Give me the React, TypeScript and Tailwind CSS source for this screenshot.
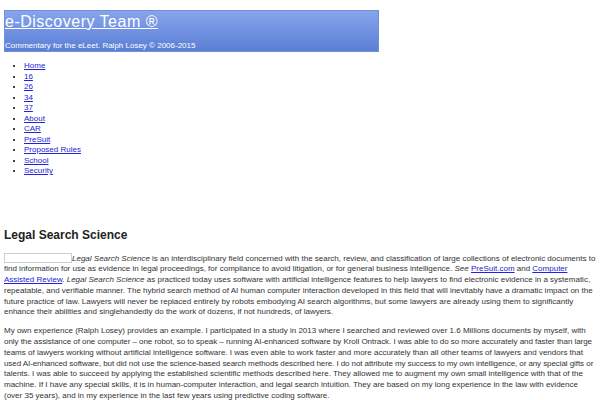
import React from "react"

const NAV = ["Home", "16", "26", "34", "37", "About", "CAR", "PreSuit", "Proposed Rules", "School", "Security"]

function A({ children }: { children: React.ReactNode }) {
  return (
    <a href="#" className="text-[#2323d8] underline">
      {children}
    </a>
  )
}

export default function App() {
  return (
    <div
      className="w-[600px] h-[400px] overflow-hidden bg-white px-[4px] pt-[10px] text-[#333]"
      style={{ fontFamily: '"Liberation Sans", Arial, sans-serif' }}
    >
      {/* Header */}
      <div className="w-[375px] h-[42px] border border-[#7090da] bg-gradient-to-b from-[#87a4ec] to-[#5b7fd6] text-white">
        <a href="#" className="block pt-[2px] text-[16px] leading-[18px] tracking-[0.5px] underline">
          e-Discovery Team ®
        </a>
        <p className="mt-[10px] text-[8px] leading-[10px]">Commentary for the eLeet. Ralph Losey © 2006-2015</p>
      </div>

      {/* Nav */}
      <ul className="mt-[9px] list-disc pl-[20px] text-[8px] leading-[10.5px] text-black">
        {NAV.map((n) => (
          <li key={n}>
            <A>{n}</A>
          </li>
        ))}
      </ul>

      {/* Article */}
      <h2 className="mt-[51px] text-[12px] leading-[14px] font-bold text-[#222]">Legal Search Science</h2>

      <div className="mt-[11px] w-[592px] text-[8px] leading-[10.8px]">
        <p>
          <span className="inline-block w-[68px] h-[10px] border border-[#cfcfcf] align-[-2px]"></span>
          <em>Legal Search Science</em> is an interdisciplinary field concerned with the search, review, and
          classification of large collections of electronic documents to find information for use as evidence in
          legal proceedings, for compliance to avoid litigation, or for general business intelligence.{" "}
          <em>See</em> <A>PreSuit.com</A> and <A>Computer</A> <A>Assisted Review</A>.{" "}
          <em>Legal Search Science</em> as practiced today uses software with artificial intelligence features to
          help lawyers to find electronic evidence in a systematic, repeatable, and verifiable manner. The hybrid
          search method of AI human computer interaction developed in this field that will inevitably have a
          dramatic impact on the future practice of law. Lawyers will never be replaced entirely by robots
          embodying AI search algorithms, but some lawyers are already using them to significantly enhance their
          abilities and singlehandedly do the work of dozens, if not hundreds, of lawyers.
        </p>
        <p className="mt-[8px]">
          My own experience (Ralph Losey) provides an example. I participated in a study in 2013 where I searched
          and reviewed over 1.6 Millions documents by myself, with
          <br />
          <span className="tracking-[-0.05px]">
            only the assistance of one computer – one robot, so to speak – running AI-enhanced software by Kroll
            Ontrack. I was able to do so more accurately and faster than large
          </span>{" "}
          teams of lawyers working without artificial intelligence software. I was even able to work faster and
          more accurately than all other teams of lawyers and vendors that{" "}
          <span className="tracking-[-0.08px]">
            used AI-enhanced software, but did not use the science-based search methods described here. I do not
            attribute my success to my own intelligence, or any special gifts
          </span>{" "}
          or talents. I was able to succeed by applying the established scientific methods described here. They
          allowed me to augment my own small intelligence with that of the machine. If I have any special skills,
          it is in human-computer interaction, and legal search intuition. They are based on my long experience in
          the law with evidence (over 35 years), and in my experience in the last few years using predictive coding
          software.
        </p>
      </div>
    </div>
  )
}
